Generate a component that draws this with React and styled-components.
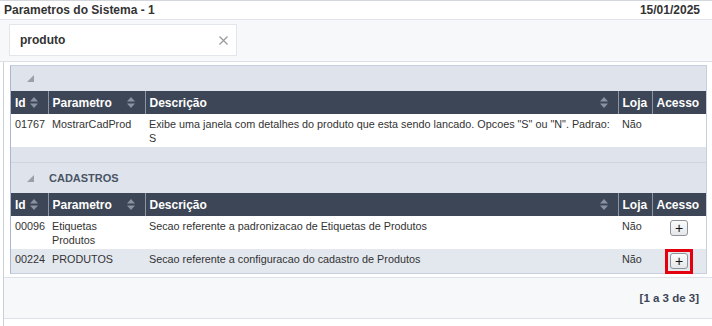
import React from "react";
import styled, { createGlobalStyle } from "styled-components";

const Global = createGlobalStyle`
  html, body { margin: 0; padding: 0; background: #fff; }
  body { font-family: "Liberation Sans", Arial, sans-serif; color: #333; }
  * { box-sizing: border-box; }
`;

const Page = styled.div`
  width: 712px;
  height: 326px;
  overflow: hidden;
  display: flex;
  flex-direction: column;
`;

const TitleBar = styled.div`
  height: 20px;
  border-top: 1px solid #d3d6db;
  border-bottom: 1px solid #e1e5eb;
  display: flex;
  align-items: center;
  justify-content: space-between;
  padding: 0 12px 0 4px;
  font-size: 12px;
  font-weight: bold;
  color: #333;
`;

const FilterArea = styled.div`
  height: 42px;
  background: #f7f8fa;
  padding: 4px 9px;
  border-bottom: 1px solid #dde1e7;
`;

const SearchBox = styled.div`
  width: 228px;
  height: 32px;
  background: #fff;
  border: 1px solid #e3e6ea;
  display: flex;
  align-items: center;
  justify-content: space-between;
  padding: 0 8px 0 10px;
  font-size: 12px;
  font-weight: bold;
  color: #333;
`;

const Content = styled.div`
  flex: 1;
  margin-left: 3px;
  border-left: 1px solid #c9d0da;
  padding: 3px 5px 0 6px;
  display: flex;
  flex-direction: column;
`;

const Grid = styled.div`
  border: 1px solid #c5cfdd;
  border-left-color: #a9b8cf;
  background: #dfe4ec;
`;

const GroupSpacer = styled.div`
  height: 16px;
  border-bottom: 1px solid #cdd5e0;
`;

const GroupHeader = styled.div`
  height: ${(p) => p.$h}px;
  display: flex;
  align-items: center;
  gap: 15px;
  padding-left: 16px;
  font-size: 11px;
  font-weight: bold;
  color: #4a5464;
`;

const Table = styled.table`
  width: 100%;
  border-collapse: collapse;
  table-layout: fixed;
`;

const Th = styled.th`
  background: #3c4656;
  color: #fff;
  font-size: 12px;
  font-weight: bold;
  text-align: left;
  height: 23px;
  padding: 0 ${(p) => (p.$spread ? "10px" : "4px")} 0 4px;
  border-left: 1px solid #8c95a3;
  white-space: nowrap;
  &:first-child { border-left: none; }
`;

const ThInner = styled.div`
  display: flex;
  align-items: center;
  justify-content: ${(p) => (p.$spread ? "space-between" : "flex-start")};
  gap: 4px;
`;

const Tr = styled.tr`
  background: ${(p) => (p.$alt ? "#e3e8ef" : "#fff")};
`;

const Td = styled.td`
  font-size: 10.8px;
  line-height: 14px;
  color: #333;
  padding: ${(p) => (p.$btn ? "4px 4px 4px" : "3px 4px 2px")};
  vertical-align: top;
  text-align: ${(p) => (p.$btn ? "center" : "left")};
`;

const PlusButton = styled.button`
  position: relative;
  display: inline-block;
  vertical-align: top;
  width: 18px;
  height: 16px;
  padding: 0;
  border: 1px solid #8f949b;
  border-radius: 3px;
  background: linear-gradient(#fbfbfb, #e4e6e9);
  font-family: "Liberation Sans", Arial, sans-serif;
  font-size: 14px;
  line-height: 13px;
  color: #111;
  cursor: pointer;
  &::after {
    content: "";
    display: ${(p) => (p.$focus ? "block" : "none")};
    position: absolute;
    left: -6px;
    right: -6px;
    top: -5px;
    bottom: -6px;
    border: 3px solid #e3000f;
  }
`;

const Footer = styled.div`
  margin: 3px -5px 0 -6px;
  height: 42px;
  background: #f7f8fa;
  border-top: 1px solid #dde2ea;
  border-bottom: 1px solid #dde2ea;
  display: flex;
  align-items: center;
  justify-content: flex-end;
  padding-right: 13px;
  font-size: 11.5px;
  font-weight: bold;
  color: #3c4656;
`;

const Tri = () => (
  <svg width="7" height="7" viewBox="0 0 7 7">
    <polygon points="7,0 7,7 0,7" fill="#9aa0a8" />
  </svg>
);

const Sort = () => (
  <svg width="8" height="11" viewBox="0 0 8 11">
    <polygon points="4,0 8,4.5 0,4.5" fill="#8a93a1" />
    <polygon points="0,6.5 8,6.5 4,11" fill="#8a93a1" />
  </svg>
);

const XIcon = () => (
  <svg width="9" height="9" viewBox="0 0 9 9">
    <path d="M0.5 0.5 L8.5 8.5 M8.5 0.5 L0.5 8.5" stroke="#9a9a9a" strokeWidth="1.2" />
  </svg>
);

const Cols = () => (
  <colgroup>
    <col style={{ width: 37 }} />
    <col style={{ width: 97 }} />
    <col style={{ width: 473 }} />
    <col style={{ width: 34 }} />
    <col style={{ width: 54 }} />
  </colgroup>
);

const Head = () => (
  <thead>
    <tr>
      <Th><ThInner>Id <Sort /></ThInner></Th>
      <Th $spread><ThInner $spread>Parametro <Sort /></ThInner></Th>
      <Th $spread><ThInner $spread>Descrição <Sort /></ThInner></Th>
      <Th>Loja</Th>
      <Th>Acesso</Th>
    </tr>
  </thead>
);

const groups = [
  {
    name: "",
    rows: [
      {
        id: "01767",
        p: "MostrarCadProd",
        d: 'Exibe uma janela com detalhes do produto que esta sendo lancado. Opcoes "S" ou "N". Padrao: S',
        l: "Não",
        btn: false,
      },
    ],
  },
  {
    name: "CADASTROS",
    rows: [
      { id: "00096", p: "Etiquetas Produtos", d: "Secao referente a padronizacao de Etiquetas de Produtos", l: "Não", btn: true },
      { id: "00224", p: "PRODUTOS", d: "Secao referente a configuracao do cadastro de Produtos", l: "Não", btn: true, focus: true },
    ],
  },
];

export default function App() {
  return (
    <Page>
      <Global />
      <TitleBar>
        <span>Parametros do Sistema - 1</span>
        <span>15/01/2025</span>
      </TitleBar>
      <FilterArea>
        <SearchBox>
          <span>produto</span>
          <XIcon />
        </SearchBox>
      </FilterArea>
      <Content>
        <Grid>
          {groups.map((g, gi) => (
            <React.Fragment key={gi}>
              {gi > 0 && <GroupSpacer />}
              <GroupHeader $h={gi === 0 ? 25 : 30}>
                <Tri />
                {g.name && <span>{g.name}</span>}
              </GroupHeader>
              <Table>
                <Cols />
                <Head />
                <tbody>
                  {g.rows.map((r, ri) => (
                    <Tr key={r.id} $alt={ri % 2 === 1}>
                      <Td>{r.id}</Td>
                      <Td>{r.p}</Td>
                      <Td>{r.d}</Td>
                      <Td>{r.l}</Td>
                      <Td $btn>{r.btn && <PlusButton $focus={r.focus}>+</PlusButton>}</Td>
                    </Tr>
                  ))}
                </tbody>
              </Table>
            </React.Fragment>
          ))}
        </Grid>
        <Footer>[1 a 3 de 3]</Footer>
      </Content>
    </Page>
  );
}
